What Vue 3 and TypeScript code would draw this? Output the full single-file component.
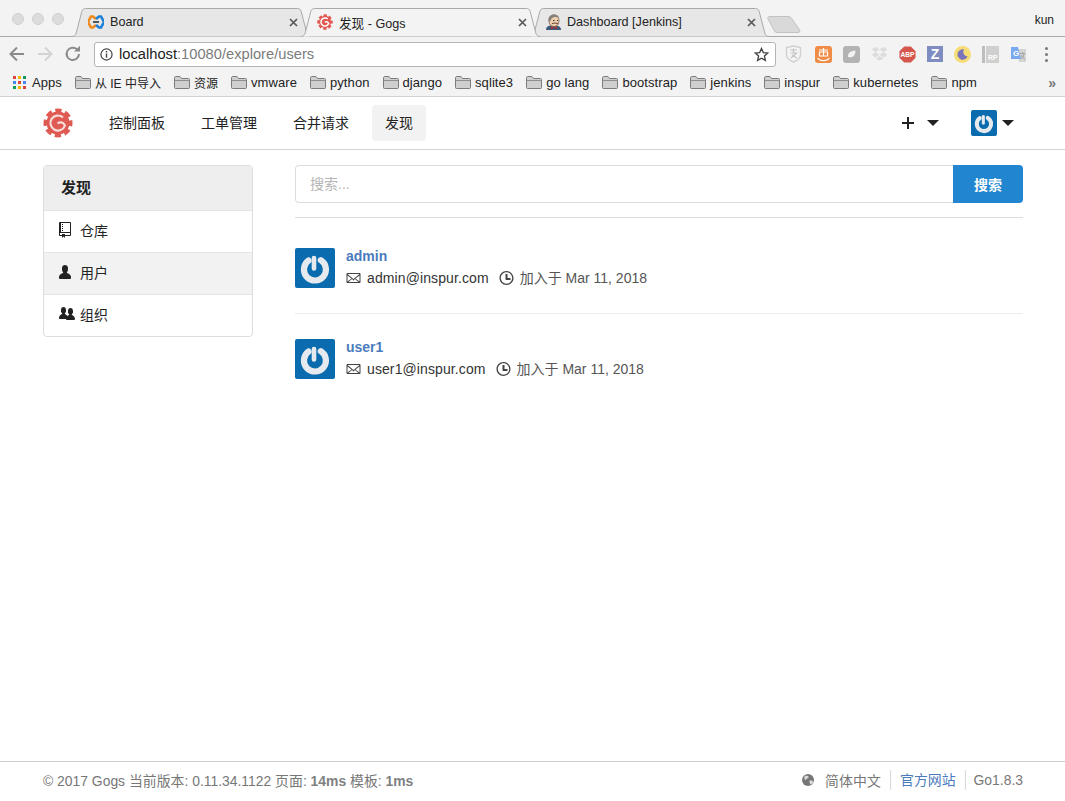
<script setup lang="ts">
const bookmarks = ['从 IE 中导入', '资源', 'vmware', 'python', 'django', 'sqlite3', 'go lang', 'bootstrap', 'jenkins', 'inspur', 'kubernetes', 'npm']
const navLinks = [
  { label: '控制面板', active: false },
  { label: '工单管理', active: false },
  { label: '合并请求', active: false },
  { label: '发现', active: true },
]
const users = [
  { name: 'admin', email: 'admin@inspur.com', joined: '加入于 Mar 11, 2018' },
  { name: 'user1', email: 'user1@inspur.com', joined: '加入于 Mar 11, 2018' },
]
const appColors = ['#db4437', '#f4b400', '#0f9d58', '#4285f4', '#db4437', '#4285f4', '#0f9d58', '#f4b400', '#db4437']

const tabPath = 'M0 28.5 C2.5 28.5 3.6 27 4.2 25 L9.8 3.5 C10.4 1.5 11.5 .5 13.5 .5 L225.5 .5 C227.5 .5 228.6 1.5 229.2 3.5 L234.8 25 C235.4 27 236.5 28.5 239 28.5'

function isCjk(s: string) {
  return /[\u4e00-\u9fff]/.test(s)
}
</script>

<template>
  <div class="page">
    <div class="tabstrip">
      <div class="traffic">
        <i></i><i></i><i></i>
      </div>
      <div class="tabs">
        <div class="tab">
          <svg class="tab-shape" width="239" height="29" viewBox="0 0 239 29"><path :d="tabPath" fill="#e7e7e7" stroke="#a9a9a9" /></svg>
          <svg class="favicon" width="16" height="16" viewBox="0 0 16 16">
            <path d="M8 5 L5 2.5 H3 L0 8 L3 13.5 H5 L8 11" fill="none" stroke="#f08a1c" stroke-width="2.6" />
            <path d="M8 5 L11 2.5 H13 L16 8 L13 13.5 H11 L8 11" fill="none" stroke="#1d7fd6" stroke-width="2.6" />
            <path d="M5 8 H11" stroke="#333" stroke-width="1.6" />
          </svg>
          <span class="tab-title">Board</span>
          <svg class="tab-close" width="9" height="9" viewBox="0 0 9 9"><path d="M1 1 L8 8 M8 1 L1 8" stroke="#5a5a5a" stroke-width="1.7" /></svg>
        </div>
        <div class="tab tab-active">
          <svg class="tab-shape" width="239" height="29" viewBox="0 0 239 29"><path :d="tabPath" fill="#f3f3f3" stroke="#a9a9a9" /></svg>
          <svg class="favicon" width="16" height="16" viewBox="0 0 30 30">
            <circle cx="15" cy="15" r="11.5" fill="#e0574f" />
            <circle cx="15" cy="15" r="12.5" fill="none" stroke="#e0574f" stroke-width="4" stroke-dasharray="6.2 3.62" stroke-dashoffset="3.1" />
            <path d="M20 9.5 A7.5 7.5 0 1 0 22 17.5 C20 14 17 13.5 14.5 15.5" fill="none" stroke="#fff" stroke-width="2.8" />
          </svg>
          <span class="tab-title">发现 - Gogs</span>
          <svg class="tab-close" width="9" height="9" viewBox="0 0 9 9"><path d="M1 1 L8 8 M8 1 L1 8" stroke="#5a5a5a" stroke-width="1.7" /></svg>
        </div>
        <div class="tab">
          <svg class="tab-shape" width="239" height="29" viewBox="0 0 239 29"><path :d="tabPath" fill="#e7e7e7" stroke="#a9a9a9" /></svg>
          <svg class="favicon jenkins" width="15" height="16" viewBox="0 0 15 16">
            <path d="M0 16 C0 13 2 12 4 11.5 H10 C13 12 15 13 15 16 Z" fill="#3c5a78" />
            <path d="M3 7 C3 2.5 5 1 8 1 C11.5 1 13 3.5 13 7 C13 10.5 11 12.5 8 12.5 C5 12.5 3 10.5 3 7 Z" fill="#efcfae" stroke="#6e4a38" stroke-width=".7" />
            <path d="M3 8 C1.5 4 4 .5 8 .5 C10.5 .5 12.5 1.5 13 3.5 C10 2.5 7 2.8 5.5 4.5 C5 6 4.5 7 3 8 Z" fill="#85807a" />
            <path d="M7 6.5 H8.5 M11 6.5 H12" stroke="#333" stroke-width="1" />
            <path d="M6 9.8 C7.5 8.8 10 8.8 12 9.8" fill="none" stroke="#6e4a38" stroke-width="1.1" />
            <path d="M5 12.5 L8 13.7 L11 12.5 V15 L8 13.9 L5 15 Z" fill="#c0272d" />
          </svg>
          <span class="tab-title">Dashboard [Jenkins]</span>
          <svg class="tab-close" width="9" height="9" viewBox="0 0 9 9"><path d="M1 1 L8 8 M8 1 L1 8" stroke="#5a5a5a" stroke-width="1.7" /></svg>
        </div>
        <svg class="new-tab" width="34" height="17" viewBox="0 0 34 17"><path d="M3 .5 H21 C23 .5 24 1.5 25 3 L32.5 14 C33.5 15.5 32.5 16.5 31 16.5 H10 C8.5 16.5 7.5 15.5 7 14 L1 3 C.4 1.5 1 .5 3 .5 Z" fill="#d9d9d9" stroke="#c2c2c2" /></svg>
      </div>
      <span class="profile">kun</span>
    </div>

    <div class="toolbar">
      <svg class="tool" width="18" height="18" viewBox="0 0 18 18"><path d="M16 9 H3 M9 2.5 L2.5 9 L9 15.5" fill="none" stroke="#8b8b8b" stroke-width="2" /></svg>
      <svg class="tool" width="18" height="18" viewBox="0 0 18 18"><path d="M2 9 H15 M9 2.5 L15.5 9 L9 15.5" fill="none" stroke="#d3d3d3" stroke-width="2" /></svg>
      <svg class="tool" width="18" height="18" viewBox="0 0 18 18"><path d="M15 9 A6.2 6.2 0 1 1 13 4.3" fill="none" stroke="#8b8b8b" stroke-width="2" /><path d="M10 6.5 H16 V.8 Z" fill="#8b8b8b" /></svg>
      <div class="omnibox">
        <svg width="13" height="13" viewBox="0 0 14 14"><circle cx="7" cy="7" r="6" fill="none" stroke="#444" stroke-width="1.3" /><path d="M7 6 V10.5 M7 3.2 V4.8" stroke="#444" stroke-width="1.5" /></svg>
        <span class="url"><b>localhost</b>:10080/explore/users</span>
        <svg class="star" width="15" height="15" viewBox="0 0 24 24"><path d="M12 2.5 L14.9 9 L22 9.7 L16.7 14.5 L18.2 21.5 L12 17.9 L5.8 21.5 L7.3 14.5 L2 9.7 L9.1 9 Z" fill="none" stroke="#444" stroke-width="2.2" /></svg>
      </div>
      <div class="extensions">
        <svg class="ext-first" width="17" height="18" viewBox="0 0 17 18"><path d="M1.5 2.5 L8.5 1 L15.5 2.5 V10 C15.5 14 11 16 8.5 17 C6 16 1.5 14 1.5 10 Z" fill="#f4f4f4" stroke="#d0d0d0" stroke-width="1.4" /><path d="M5 5 H12 M8.5 3.5 V8 M5.5 8 H11.5 L6 13 M7 10 L12 13" fill="none" stroke="#c4c4c4" stroke-width="1.2" /></svg>
        <svg width="17" height="17" viewBox="0 0 17 17"><rect width="17" height="17" rx="3" fill="#f08c45" /><path d="M4 4 H13 M8.5 2 V10 M4.5 6 H12.5 V10 H4.5 Z M2.5 12 C5 15.5 12 15.5 14.5 12" fill="none" stroke="#fff" stroke-width="1.2" /></svg>
        <svg width="17" height="17" viewBox="0 0 17 17"><rect width="17" height="17" rx="3" fill="#b3b3b3" /><path d="M5 11 C4.5 7 8 4.5 12.5 4.8 C12.5 9 10 12.5 5 11 Z" fill="#f2f2f2" /></svg>
        <svg width="17" height="16" viewBox="0 0 17 16"><path d="M4.5 1 L8.5 3.6 L4.5 6.2 L.5 3.6 Z M12.5 1 L16.5 3.6 L12.5 6.2 L8.5 3.6 Z M4.5 6.2 L8.5 8.8 L4.5 11.4 L.5 8.8 Z M12.5 6.2 L16.5 8.8 L12.5 11.4 L8.5 8.8 Z M4.8 12.4 L8.5 10 L12.2 12.4 L8.5 14.8 Z" fill="#dcdcdc" /></svg>
        <svg width="17" height="17" viewBox="0 0 18 18"><path d="M5.5 .5 H12.5 L17.5 5.5 V12.5 L12.5 17.5 H5.5 L.5 12.5 V5.5 Z" fill="#d5564d" /><text x="9" y="12" text-anchor="middle" class="abp">ABP</text></svg>
        <div class="ext-z">Z</div>
        <svg width="17" height="17" viewBox="0 0 17 17"><circle cx="8.5" cy="8.5" r="8.5" fill="#f5dc74" /><path d="M10 3.5 A5.2 5.2 0 1 0 13.5 10.5 A4.6 4.6 0 0 1 10 3.5 Z" fill="#7b74bd" /></svg>
        <svg width="17" height="17" viewBox="0 0 17 17"><rect width="3" height="17" fill="#bdbdbd" /><rect x="4" width="13" height="17" fill="#cfcfcf" /><text x="6" y="14" class="rp">RP</text></svg>
        <svg width="17" height="17" viewBox="0 0 17 17"><path d="M7 3 H16 V16 H9 Z" fill="#d4d4d4" /><path d="M1 1 H8 L11 13 H1 Z" fill="#78a9ee" /><text x="3" y="10" class="gt">G</text><path d="M10 7.5 H15 M12.5 6.5 V7.5 M14 8 C13.5 11 11.5 12.5 10.5 13 M11 9 C12 11 13.5 12.5 15 13" fill="none" stroke="#9a9a9a" stroke-width=".9" /></svg>
        <div class="ext-menu"><i></i><i></i><i></i></div>
      </div>
    </div>

    <div class="bookmarks">
      <div class="apps-grid">
        <i v-for="(c, i) in appColors" :key="i" :style="{ background: c }"></i>
      </div>
      <span class="bm-apps">Apps</span>
      <div v-for="b in bookmarks" :key="b" class="bm">
        <svg width="16" height="13" viewBox="0 0 16 13"><path d="M.5 2 C.5 1 1 .5 2 .5 H6 L7.5 2.5 H14.5 C15.2 2.5 15.5 3 15.5 3.5 V11.5 C15.5 12.2 15.2 12.5 14.5 12.5 H1.5 C.8 12.5 .5 12.2 .5 11.5 Z" fill="#cfcfcf" stroke="#7c7c7c" /><path d="M1 4.5 H15" stroke="#8f8f8f" /></svg>
        <span :class="{ 'bm-cjk': isCjk(b) }">{{ b }}</span>
      </div>
      <span class="bm-more">»</span>
    </div>

    <header class="navbar">
      <svg class="logo" width="30" height="30" viewBox="0 0 30 30">
        <circle cx="15" cy="15" r="11.5" fill="#de5a52" />
        <circle cx="15" cy="15" r="12.5" fill="none" stroke="#de5a52" stroke-width="4" stroke-dasharray="6.2 3.62" stroke-dashoffset="3.1" />
        <path d="M20 9.5 A7.5 7.5 0 1 0 22 17.5 C20 14 17 13.5 14.5 15.5" fill="none" stroke="#f8dcda" stroke-width="2.2" />
      </svg>
      <nav class="nav-links">
        <a v-for="l in navLinks" :key="l.label" class="nav-link" :class="{ active: l.active }">{{ l.label }}</a>
      </nav>
      <div class="nav-right">
        <svg width="14" height="14" viewBox="0 0 14 14"><path d="M7 1 V13 M1 7 H13" stroke="#222" stroke-width="2" /></svg>
        <i class="caret plus-caret"></i>
        <svg class="power nav-avatar" width="26" height="26" viewBox="0 0 40 40">
          <rect width="40" height="40" rx="3" fill="#0a6cae" />
          <path d="M13.5 12.6 A11 11 0 1 0 25.8 12.2" fill="none" stroke="#e6eaee" stroke-width="6.2" stroke-linecap="round" />
          <path d="M19 10 V20.5" stroke="#e6eaee" stroke-width="4.6" stroke-linecap="round" />
        </svg>
        <i class="caret"></i>
      </div>
    </header>

    <main class="content">
      <aside class="sidebar">
        <div class="side-head">发现</div>
        <a class="side-item">
          <svg width="12" height="16" viewBox="0 0 12 16"><path d="M4 9H3V8h1v1zm0-3H3v1h1V6zm0-2H3v1h1V4zm0-2H3v1h1V2zm8-1v12c0 .55-.45 1-1 1H6v2l-1.5-1.5L3 16v-2H1c-.55 0-1-.45-1-1V1c0-.55.45-1 1-1h10c.55 0 1 .45 1 1zm-1 10H1v2h2v-1h3v1h5v-2zm0-10H2v9h9V1z" /></svg>
          <span>仓库</span>
        </a>
        <a class="side-item current">
          <svg width="12" height="16" viewBox="0 0 12 16"><path d="M12 14.002a.998.998 0 0 1-.998.998H1.001A1 1 0 0 1 0 13.999V13c0-2.633 4-4 4-4s.229-.409 0-1c-.841-.62-.944-1.59-1-4 .173-2.413 1.867-3 3-3s2.827.586 3 3c-.056 2.41-.159 3.38-1 4-.229.59 0 1 0 1s4 1.367 4 4v1.002z" /></svg>
          <span>用户</span>
        </a>
        <a class="side-item">
          <svg class="org" width="16" height="16" viewBox="0 0 16 16"><path d="M16 12.999c0 .439-.45 1-1 1H7.995c-.539 0-.994-.447-.995-.999H1c-.54 0-1-.561-1-1 0-2.634 3-4 3-4s.229-.409 0-1c-.841-.62-1.058-.59-1-3 .058-2.419 1.367-3 2.5-3s2.442.58 2.5 3c.058 2.41-.159 2.379-1 3-.229.59 0 1 0 1s1.549.711 2.42 2.088C9.196 9.369 10 8.999 10 8.999s.229-.409 0-1c-.841-.62-1.058-.59-1-3 .058-2.419 1.367-3 2.5-3s2.437.581 2.495 3c.059 2.41-.158 2.38-1 3-.229.59 0 1 0 1s3.005 1.366 3.005 4z" /></svg>
          <span>组织</span>
        </a>
      </aside>

      <section class="results">
        <form class="search" @submit.prevent>
          <input class="search-input" placeholder="搜索..." />
          <button class="search-btn">搜索</button>
        </form>
        <div class="search-rule"></div>
        <div v-for="u in users" :key="u.name" class="user-row">
          <svg class="power" width="40" height="40" viewBox="0 0 40 40">
            <rect width="40" height="40" rx="2" fill="#0a6cae" />
            <path d="M13.5 12.6 A11 11 0 1 0 25.8 12.2" fill="none" stroke="#e6eaee" stroke-width="6.2" stroke-linecap="round" />
            <path d="M19 10 V20.5" stroke="#e6eaee" stroke-width="4.6" stroke-linecap="round" />
          </svg>
          <div class="user-info">
            <a class="user-name">{{ u.name }}</a>
            <div class="user-meta">
              <svg width="15" height="16" viewBox="0 0 14 16"><path d="M0 4v8c0 .55.45 1 1 1h12c.55 0 1-.45 1-1V4c0-.55-.45-1-1-1H1c-.55 0-1 .45-1 1zm13 0L7 9 1 4h12zM1 5.5l4 3-4 3v-6zM2 12l3.5-3L7 10.5 8.5 9l3.5 3H2zm11-.5l-4-3 4-3v6z" /></svg>
              <span class="email">{{ u.email }}</span>
              <svg class="clock" width="15" height="16" viewBox="0 0 14 16"><path d="M8 8h3v2H7c-.55 0-1-.45-1-1V4h2v4zM7 2.3c3.14 0 5.7 2.56 5.7 5.7s-2.56 5.7-5.7 5.7A5.71 5.71 0 0 1 1.3 8c0-3.14 2.56-5.7 5.7-5.7zM7 1C3.14 1 0 4.14 0 8s3.14 7 7 7 7-3.14 7-7-3.14-7-7-7z" /></svg>
              <span class="joined">{{ u.joined }}</span>
            </div>
          </div>
        </div>
      </section>
    </main>

    <footer class="footer">
      <div class="foot-left">© 2017 Gogs 当前版本: 0.11.34.1122 页面: <strong>14ms</strong> 模板: <strong>1ms</strong></div>
      <div class="foot-right">
        <svg class="globe" width="12" height="14" viewBox="0 0 14 16"><circle cx="7" cy="8" r="7" fill="#767676" /><path d="M3 3.5 C5 2.5 7 3 8 4.5 C7 6.5 5 6 4.5 8 C3 8 2 6 3 3.5 Z M9 8.5 C11 8 13 9 13 10.5 C12 12.5 10.5 13.5 9.5 13 C9.5 11.5 8 10.5 9 8.5 Z" fill="#d8d8d8" /></svg>
        <span class="lang">简体中文</span>
        <a class="site">官方网站</a>
        <span class="go">Go1.8.3</span>
      </div>
    </footer>
  </div>
</template>

<style>
html, body {
  margin: 0;
  background: #fff;
}
</style>

<style scoped>
.page {
  height: 801px;
  display: flex;
  flex-direction: column;
  overflow: hidden;
  font-family: "Liberation Sans", "Noto Sans CJK SC", sans-serif;
  font-size: 14px;
  color: #222;
}

/* browser chrome */
.tabstrip {
  height: 36px;
  flex: none;
  display: flex;
  background: #f3f3f3;
  border-bottom: 1px solid #a9a9a9;
}
.traffic {
  width: 60px;
  margin-left: 12px;
  padding-top: 13px;
  display: flex;
  gap: 8px;
}
.traffic i {
  width: 12px;
  height: 12px;
  border-radius: 50%;
  background: #dcdcdc;
  border: 0.5px solid #d0d0d0;
  box-sizing: border-box;
}
.tabs {
  display: flex;
  padding-top: 8px;
  flex: 1;
}
.tab {
  position: relative;
  width: 239px;
  height: 29px;
  margin-right: -10px;
  display: flex;
  align-items: center;
  padding: 0 0 1px 16px;
  box-sizing: border-box;
  font-size: 12.6px;
  color: #222;
}
.tab-active {
  z-index: 2;
}
.tab-shape {
  position: absolute;
  left: 0;
  top: 0;
}
.favicon {
  position: relative;
  flex: none;
}
.tab-title {
  position: relative;
  margin-left: 6px;
  flex: 1;
}
.tab-close {
  position: relative;
  flex: none;
  margin-right: 13px;
}
.new-tab {
  margin: 8px 0 0 8px;
  flex: none;
}
.profile {
  padding: 13px 11px 0 0;
  font-size: 12px;
  color: #222;
}
.toolbar {
  height: 32px;
  flex: none;
  box-sizing: border-box;
  padding: 2px 0 0 8px;
  display: flex;
  align-items: center;
  background: #f3f3f3;
}
.tool {
  margin-right: 10px;
  flex: none;
}
.omnibox {
  width: 682px;
  height: 25px;
  flex: none;
  display: flex;
  align-items: center;
  gap: 6px;
  padding: 0 6px 0 5px;
  box-sizing: border-box;
  background: #fff;
  border: 1px solid #b4b4b4;
  border-radius: 3px;
  margin-left: 2px;
}
.url {
  flex: 1;
  font-size: 14.7px;
  color: #7b7b7b;
}
.url b {
  font-weight: 400;
  color: #222;
}
.extensions {
  display: flex;
  align-items: center;
  gap: 11px;
  margin-left: 9px;
}
.ext-first {
  margin-right: 2px;
}
.abp,
.rp {
  font: 700 7px "Liberation Sans", sans-serif;
  fill: #fff;
}
.gt {
  font: 700 8px "Liberation Sans", sans-serif;
  fill: #fff;
}
.ext-z {
  width: 16px;
  height: 16px;
  background: #7f8cc2;
  color: #fff;
  font-weight: 700;
  font-size: 14px;
  line-height: 16px;
  text-align: center;
}
.ext-menu {
  margin-left: 7px;
  display: flex;
  flex-direction: column;
  gap: 3px;
}
.ext-menu i {
  width: 3px;
  height: 3px;
  border-radius: 50%;
  background: #777;
}
.bookmarks {
  height: 27px;
  flex: none;
  display: flex;
  align-items: center;
  padding-left: 13px;
  background: #f3f3f3;
  border-bottom: 1px solid #d2d2d2;
  font-size: 13px;
  letter-spacing: 0.08px;
}
.apps-grid {
  width: 13px;
  display: grid;
  grid-template-columns: repeat(3, 3px);
  gap: 2px;
  flex: none;
}
.apps-grid i {
  height: 3px;
}
.bm-apps {
  margin-left: 6px;
}
.bm {
  display: flex;
  align-items: center;
  gap: 4px;
  margin-left: 13px;
}
.bm-cjk {
  font-size: 12px;
  letter-spacing: 0;
}
.bm-more {
  margin-left: auto;
  margin-right: 9px;
  font-size: 14px;
  font-weight: 700;
  line-height: 14px;
  color: #777;
}

/* gogs navbar */
.navbar {
  height: 52px;
  flex: none;
  display: flex;
  align-items: center;
  padding: 0 42px 0 43px;
  border-bottom: 1px solid #d4d4d5;
}
.logo {
  flex: none;
}
.nav-links {
  display: flex;
  gap: 10px;
  margin-left: 23px;
  font-size: 14px;
}
.nav-link {
  padding: 0 13px;
  height: 36px;
  line-height: 36px;
  border-radius: 4px;
  color: #222;
}
.nav-link.active {
  background: #f2f2f2;
}
.nav-right {
  margin-left: auto;
  display: flex;
  align-items: center;
  padding-right: 9px;
}
.caret {
  width: 0;
  height: 0;
  border-left: 6px solid transparent;
  border-right: 6px solid transparent;
  border-top: 6px solid #222;
  margin-left: 5px;
}
.plus-caret {
  margin-left: 12px;
  margin-right: 32px;
}
.power {
  flex: none;
  display: block;
}

/* main area */
.content {
  flex: 1;
  display: flex;
  gap: 42px;
  padding: 15px 42px 0 43px;
}
.sidebar {
  width: 210px;
  height: 172px;
  flex: none;
  box-sizing: border-box;
  border: 1px solid #dedede;
  border-radius: 4px;
  overflow: hidden;
}
.side-head {
  height: 44px;
  line-height: 44px;
  padding-left: 17px;
  background: #eeeeee;
  font-weight: 700;
  font-size: 15px;
  color: #222;
}
.side-item {
  height: 42px;
  box-sizing: border-box;
  display: flex;
  align-items: center;
  padding: 0 0 3px 15px;
  border-top: 1px solid #e4e4e4;
  color: #222;
  font-size: 14px;
}
.side-item svg {
  margin-right: 9px;
  fill: #222;
  flex: none;
}
.side-item svg.org {
  margin-right: 5px;
}
.side-item.current {
  background: #f2f2f2;
}
.results {
  flex: 1;
  min-width: 0;
}
.search {
  display: flex;
  height: 38px;
}
.search-input {
  flex: 1;
  min-width: 0;
  box-sizing: border-box;
  padding: 0 14px;
  border: 1px solid #dedede;
  border-right: none;
  border-radius: 4px 0 0 4px;
  outline: none;
  font: 14px "Liberation Sans", "Noto Sans CJK SC", sans-serif;
}
.search-input::placeholder {
  color: #b4b4b4;
}
.search-btn {
  width: 70px;
  border: none;
  border-radius: 0 4px 4px 0;
  background: #2185d0;
  color: #fff;
  font: 700 14px "Liberation Sans", "Noto Sans CJK SC", sans-serif;
}
.search-rule {
  height: 1px;
  margin-top: 14px;
  background: #dddddd;
}
.user-row {
  display: flex;
  gap: 11px;
  padding: 30px 0 25px;
  border-bottom: 1px solid #ececec;
}
.user-row:last-child {
  border-bottom: none;
}
.user-row + .user-row {
  padding-top: 25px;
}
.user-info {
  display: flex;
  flex-direction: column;
}
.user-name {
  font-size: 14px;
  line-height: 17px;
  font-weight: 700;
  color: #4b7bbd;
}
.user-meta {
  margin-top: 4px;
  display: flex;
  align-items: center;
  line-height: 18px;
  color: #333;
}
.user-meta svg {
  fill: #444;
  flex: none;
  margin-right: 6px;
}
.email {
  letter-spacing: 0.1px;
}
.user-meta .clock {
  margin-left: 10px;
}
.joined {
  color: #555;
}

/* footer */
.footer {
  height: 40px;
  flex: none;
  box-sizing: border-box;
  display: flex;
  align-items: center;
  justify-content: space-between;
  padding: 0 42px 3px 43px;
  border-top: 1px solid #cfcfcf;
  color: #777;
  font-size: 13.9px;
}
.foot-left strong {
  font-weight: 700;
  color: #808080;
}
.foot-right {
  display: flex;
  align-items: center;
}
.globe {
  margin-right: 11px;
}
.lang {
  letter-spacing: 0.1px;
}
.site {
  margin-left: 9px;
  padding: 0 9px;
  height: 20px;
  line-height: 20px;
  color: #4b7bbd;
  border-left: 1px solid #d8d8d8;
  border-right: 1px solid #d8d8d8;
}
.go {
  margin-left: 8px;
}
</style>
